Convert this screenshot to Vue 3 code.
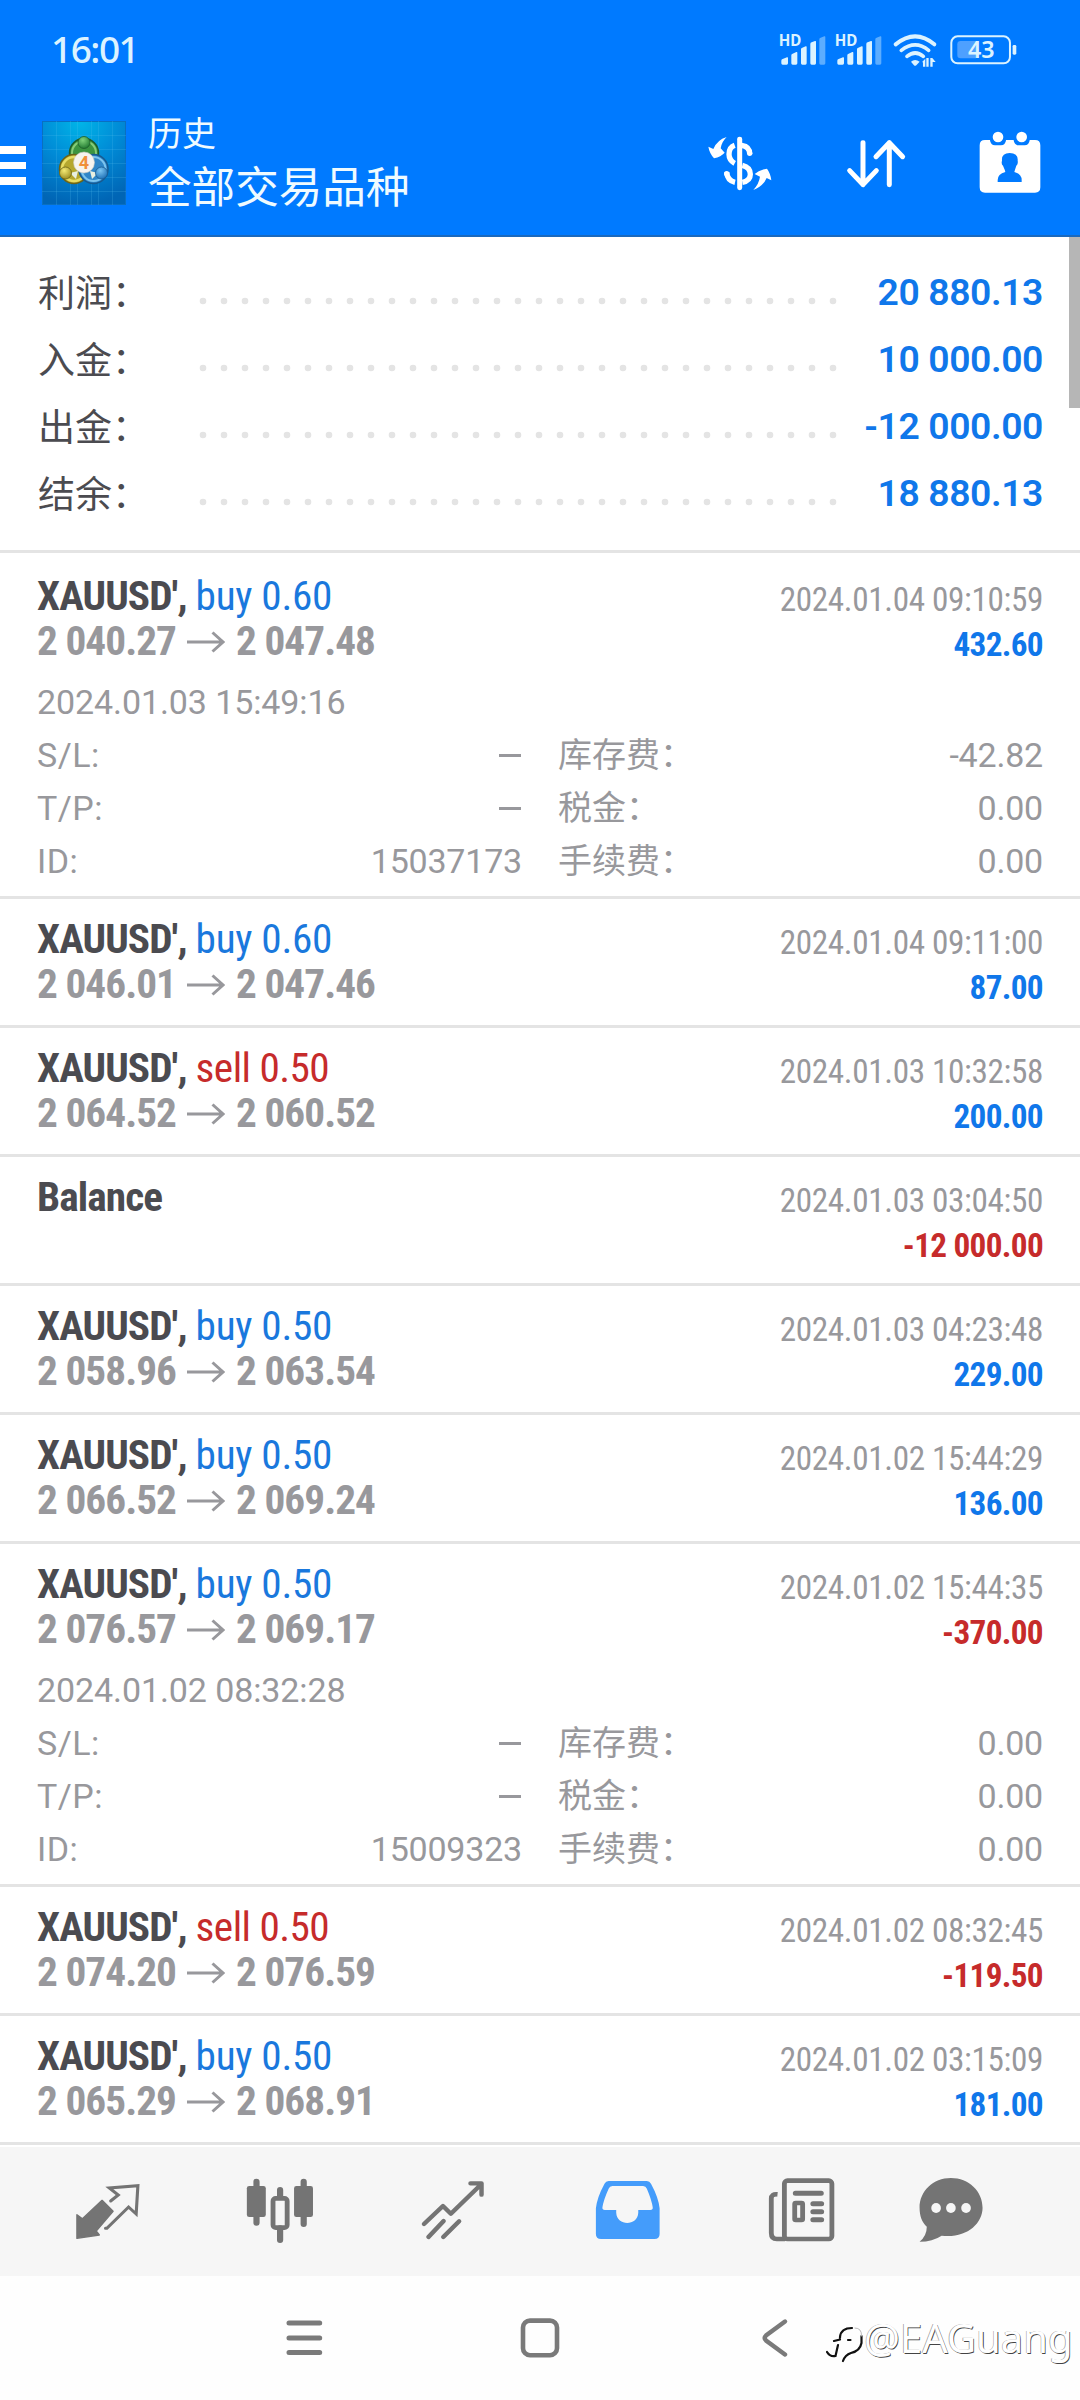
<script setup>
const summary = [
  { label: '利润：', value: '20 880.13' },
  { label: '入金：', value: '10 000.00' },
  { label: '出金：', value: '-12 000.00' },
  { label: '结余：', value: '18 880.13' },
]
const deals = [
  { sym: "XAUUSD',", side: 'buy', vol: '0.60', from: '2 040.27', to: '2 047.48', time: '2024.01.04 09:10:59', profit: '432.60',
    open: { time: '2024.01.03 15:49:16', id: '15037173', swap: '-42.82' } },
  { sym: "XAUUSD',", side: 'buy', vol: '0.60', from: '2 046.01', to: '2 047.46', time: '2024.01.04 09:11:00', profit: '87.00' },
  { sym: "XAUUSD',", side: 'sell', vol: '0.50', from: '2 064.52', to: '2 060.52', time: '2024.01.03 10:32:58', profit: '200.00' },
  { sym: 'Balance', time: '2024.01.03 03:04:50', profit: '-12 000.00' },
  { sym: "XAUUSD',", side: 'buy', vol: '0.50', from: '2 058.96', to: '2 063.54', time: '2024.01.03 04:23:48', profit: '229.00' },
  { sym: "XAUUSD',", side: 'buy', vol: '0.50', from: '2 066.52', to: '2 069.24', time: '2024.01.02 15:44:29', profit: '136.00' },
  { sym: "XAUUSD',", side: 'buy', vol: '0.50', from: '2 076.57', to: '2 069.17', time: '2024.01.02 15:44:35', profit: '-370.00',
    open: { time: '2024.01.02 08:32:28', id: '15009323', swap: '0.00' } },
  { sym: "XAUUSD',", side: 'sell', vol: '0.50', from: '2 074.20', to: '2 076.59', time: '2024.01.02 08:32:45', profit: '-119.50' },
  { sym: "XAUUSD',", side: 'buy', vol: '0.50', from: '2 065.29', to: '2 068.91', time: '2024.01.02 03:15:09', profit: '181.00' },
]
</script>

<template>
  <div class="screen">
    <header class="top">
      <div class="status">
        <span class="clock">16:01</span>
        <svg class="sys" viewBox="350 65 730 170" width="243.3" height="56.7">
          <g fill="#dcf3ff">
            <g v-for="o in [0, 168]" :key="o" :transform="`translate(${o} 0)`">
              <text x="355" y="138" font-size="46" font-weight="700" textLength="68" lengthAdjust="spacingAndGlyphs">HD</text>
              <path d="M363 181q0-4 4-5l13-5q3-1 3 2v16q0 4-4 4h-12q-4 0-4-4z" />
              <path d="M393 165q0-4 4-5l11-5q3-1 3 2v32q0 4-4 4h-10q-4 0-4-4z" />
              <path d="M422 147q0-4 4-5l10-4q3-1 3 2v49q0 4-4 4h-9q-4 0-4-4z" />
              <path d="M450 131q0-4 4-5l10-4q3-1 3 2v65q0 4-4 4h-9q-4 0-4-4z" />
              <path opacity=".42" d="M477 117q0-4 4-5l11-4q3-1 3 2v79q0 4-4 4h-10q-4 0-4-4z" />
            </g>
            <path d="M752 184q12-10 26 0l-10 11q-4 3-7 0z" />
            <path d="M786 184l9-9v24h-7v-12zM798 173h7v26h-7zM810 173h6l10 12h-9v14h-7z" />
            <rect x="1057" y="134" width="11" height="29" rx="4" />
          </g>
          <g fill="none" stroke="#dcf3ff" stroke-width="12" stroke-linecap="round">
            <path d="M706 132q59-48 116 0" />
            <path d="M723 150q42-33 82 0" stroke-width="11" />
            <path d="M740 168q25-20 49 0" stroke-width="11" />
          </g>
          <rect x="873" y="108" width="176" height="81" rx="19" fill="none" stroke="#dcf3ff" stroke-width="6" />
          <path d="M901 122h46v52h-46q-10 0-10-10v-32q0-10 10-10z" fill="#4ea0ff" />
          <text x="923" y="174" font-size="71" font-weight="600" fill="#dcf3ff" textLength="80" lengthAdjust="spacingAndGlyphs">43</text>
        </svg>
      </div>
      <div class="bar">
        <div class="burger"><i></i><i></i><i></i></div>
        <svg class="logo" viewBox="0 0 84 84" width="84" height="84">
          <defs>
            <radialGradient id="lb" cx=".45" cy="0" r="1"><stop offset="0" stop-color="#00b5e8" /><stop offset=".5" stop-color="#008ad6" /><stop offset="1" stop-color="#0065b5" /></radialGradient>
            <radialGradient id="lg" cx=".4" cy=".3" r=".8"><stop offset="0" stop-color="#7fd27a" /><stop offset="1" stop-color="#17702a" /></radialGradient>
            <radialGradient id="ly" cx=".4" cy=".3" r=".8"><stop offset="0" stop-color="#f4ea74" /><stop offset="1" stop-color="#94841a" /></radialGradient>
            <radialGradient id="lc" cx=".4" cy=".3" r=".8"><stop offset="0" stop-color="#7cc6f2" /><stop offset="1" stop-color="#1467b0" /></radialGradient>
          </defs>
          <rect x=".5" y=".5" width="83" height="83" fill="url(#lb)" stroke="#0a6fc0" />
          <path d="M0 14.500H84M0 28.500H84M0 42.500H84M0 56.500H84M0 70.500H84M14.500 0V84M28.500 0V84M35.500 0V84M49.500 0V84M56.500 0V84M70.500 0V84" stroke="#5cc4ef" stroke-opacity=".2" fill="none" />
          <circle cx="42" cy="32" r="14.500" fill="#3c9440" stroke="#1d5d2a" stroke-width="1.500" />
          <circle cx="42" cy="32" r="12" fill="none" stroke="#86cc78" stroke-width="2" />
          <circle cx="32" cy="48" r="14.500" fill="#b5a72e" stroke="#6b6418" stroke-width="1.500" />
          <circle cx="32" cy="48" r="12" fill="none" stroke="#e6dc64" stroke-width="2.500" />
          <circle cx="51.500" cy="48" r="14.500" fill="#2f86c8" stroke="#185a90" stroke-width="1.500" />
          <circle cx="51.500" cy="48" r="12" fill="none" stroke="#7cc4ee" stroke-width="2" />
          <path d="M28 52L36 50L34 58ZM56 52L48 50L50 58Z" fill="#e8efe0" />
          <circle cx="42" cy="21.500" r="6" fill="url(#lg)" stroke="#1d5d2a" stroke-width=".8" />
          <circle cx="23.500" cy="52" r="6" fill="url(#ly)" stroke="#6b6418" stroke-width=".8" />
          <circle cx="59.500" cy="52" r="6" fill="url(#lc)" stroke="#185a90" stroke-width=".8" />
          <circle cx="42" cy="41.500" r="10.500" fill="#f6f3ee" stroke="#c8c8c0" stroke-width=".6" />
          <text x="42" y="48" text-anchor="middle" font-size="18" font-weight="700" fill="#f0903a">4</text>
        </svg>
        <div class="titles">
          <div class="t1">历史</div>
          <div class="t2">全部交易品种</div>
        </div>
        <svg class="a-dollar" viewBox="140 390 200 190" width="66.7" height="63.3" fill="#fff">
          <path fill="none" stroke="#fff" stroke-width="15" stroke-linecap="round" d="M238 418V563" />
          <path fill="none" stroke="#fff" stroke-width="16" d="M244 436q25 4 24 26M223 436q-17 6-17 27 0 18 17 27M246 496q24 6 24 27 0 20-24 24M199 517q2 25 25 30" />
          <circle cx="268" cy="460" r="8" /><circle cx="199" cy="521" r="8" />
          <path d="M199 411Q184 425 181 445L193 458Q182 470 161 475Q147 459 144 440L159 447Q170 420 199 411Z" />
          <path d="M279 570Q296 551 299 530L283 522Q296 510 320 506Q331 521 333 541L319 534Q309 558 279 570Z" />
        </svg>
        <svg class="a-sort" viewBox="550 410 190 160" width="63.3" height="53.3" fill="none" stroke="#fff" stroke-width="15" stroke-linecap="round" stroke-linejoin="round">
          <path d="M607 427V553M567 511L607 553L647 511M686 553V427M646 469L686 427L726 469" />
        </svg>
        <svg class="a-cal" viewBox="955 390 195 195" width="65" height="65" fill="#fff">
          <path d="M976 420H991V421Q993 436 1006 436H1024Q1037 436 1039 421V420H1062V421Q1064 436 1077 436H1095Q1108 436 1110 421V420H1126Q1142 420 1142 436V562Q1142 578 1126 578H976Q960 578 960 562V436Q960 420 976 420Z" />
          <circle cx="1015" cy="411" r="16" /><circle cx="1086" cy="411" r="16" />
          <path fill="#007aff" d="M1050 459Q1076 459 1074 482Q1076 492 1070 497Q1065 512 1064 516Q1086 522 1086 540V546H1014V540Q1014 522 1037 516Q1036 510 1030 497Q1024 492 1027 482Q1025 459 1050 459Z" />
        </svg>
      </div>
    </header>

    <section class="summary">
      <div v-for="s in summary" :key="s.label" class="srow">
        <span class="slabel">{{ s.label }}</span>
        <svg class="dots" width="640" height="8"><line x1="4" y1="4" x2="635" y2="4" stroke="#e4e4e4" stroke-width="6.600" stroke-linecap="round" stroke-dasharray="0 21" /></svg>
        <span class="svalue">{{ s.value }}</span>
      </div>
      <i class="thumb"></i>
    </section>

    <section class="list">
      <article v-for="(d, i) in deals" :key="i" class="deal">
        <div class="head">
          <div class="left">
            <div class="name cond"><b>{{ d.sym }}</b><span v-if="d.side" :class="d.side">{{ d.side }} {{ d.vol }}</span></div>
            <div v-if="d.from" class="prices">
              <span class="cond">{{ d.from }}</span>
              <svg width="38" height="22" viewBox="0 0 38 22" fill="none" stroke="#98989c" stroke-width="3"><path d="M0 11H36M25.500 1.500L36 11L25.500 20.500" /></svg>
              <span class="cond">{{ d.to }}</span>
            </div>
          </div>
          <div class="right">
            <div class="time cond">{{ d.time }}</div>
            <div class="profit cond" :class="{ neg: d.profit[0] === '-' }">{{ d.profit }}</div>
          </div>
        </div>
        <div v-if="d.open" class="more">
          <div class="otime">{{ d.open.time }}</div>
          <div class="grid">
            <span class="k">S/L:</span><i class="dash"></i><span class="cn">库存费：</span><span class="v">{{ d.open.swap }}</span>
            <span class="k">T/P:</span><i class="dash"></i><span class="cn">税金：</span><span class="v">0.00</span>
            <span class="k">ID:</span><span class="v">{{ d.open.id }}</span><span class="cn">手续费：</span><span class="v">0.00</span>
          </div>
        </div>
      </article>
    </section>

    <nav class="tabs">
      <svg viewBox="200 120 225 240" width="77.5" height="80" preserveAspectRatio="none">
        <path fill="#747474" stroke="#747474" stroke-width="4" stroke-linejoin="round" d="M296 211L328 244L279 303L288 315L223 325V254L239 266Z" />
        <path fill="none" stroke="#747474" stroke-width="9" stroke-linecap="round" d="M321 213L343 195L317 174L400 167L395 252L373 231L310 295H306" />
      </svg>
      <svg viewBox="700 120 227 240" width="78.2" height="80" preserveAspectRatio="none">
        <path fill="none" stroke="#747474" stroke-width="18" stroke-linecap="round" d="M745 155V278M882 155V282M813.500 180V200M813.500 295V330" />
        <rect x="717" y="168" width="55" height="93" rx="7" fill="#747474" /><rect x="854" y="168" width="55" height="93" rx="7" fill="#747474" />
        <rect x="793" y="205" width="41" height="88" rx="8" fill="none" stroke="#747474" stroke-width="14" />
      </svg>
      <svg viewBox="1203 120 225 240" width="77.5" height="80" preserveAspectRatio="none" fill="none" stroke="#747474" stroke-width="13" stroke-linecap="round" stroke-linejoin="round">
        <path d="M1232 282L1287 228L1310 251L1396 165M1367 160H1399V194M1245 321L1289 273M1288 321L1334 274" />
      </svg>
      <svg viewBox="141 120 225 240" width="77.5" height="80" preserveAspectRatio="none">
        <path fill="#449cfb" fill-rule="evenodd" d="M198 153H309Q317 153 321 161Q343 203 346 235V312Q346 327 331 327H176Q161 327 161 312V235Q164 203 186 161Q190 153 198 153ZM209 168Q201 168 198 176Q183 210 180 232Q179 240 187 240H220V248C222 289 282 289 284 248V240H319Q327 240 326 232Q323 210 309 176Q306 168 298 168Z" />
      </svg>
      <svg viewBox="645 120 230 240" width="79.2" height="80" preserveAspectRatio="none" fill="none" stroke="#747474" stroke-width="14">
        <rect x="710" y="152" width="138" height="175" rx="9" />
        <path d="M690 193Q672 191 672 206V309Q672 327 688 327H712" />
        <rect x="740" y="219" width="23" height="51" rx="3" />
        <path stroke-width="15" stroke-linecap="round" d="M742 190H817M793 221H818M793 245H818M793 269H818" />
      </svg>
      <svg viewBox="1080 120 226 240" width="77.800" height="80" preserveAspectRatio="none">
        <path fill="#747474" d="M1193 144C1245 144 1285 184 1285 233C1285 283 1235 326 1166 317Q1140 335 1102 335Q1123 317 1123 290C1109 276 1102 258 1102 233C1102 184 1141 144 1193 144Z" />
        <g fill="#f6f6f6"><ellipse cx="1150" cy="234" rx="14" ry="15" /><ellipse cx="1193" cy="234" rx="14" ry="15" /><ellipse cx="1237" cy="234" rx="14" ry="15" /></g>
      </svg>
    </nav>

    <footer class="keys">
      <svg width="38" height="42" fill="none" stroke="#7a7a7a" stroke-width="5" stroke-linecap="round"><path d="M4 6H34.700M4 21H34.700M4 35.600H34.700" /></svg>
      <svg width="42" height="42" fill="none" stroke="#7a7a7a" stroke-width="4.600"><rect x="4" y="3.600" width="34" height="34.600" rx="7" /></svg>
      <svg width="28" height="42" fill="none" stroke="#7a7a7a" stroke-width="4.400" stroke-linecap="round"><path d="M24 4.500L5 18.500Q2.500 21 5 23.500L24 37.500" /></svg>
      <div class="mark">
        <svg width="42" height="46" viewBox="10 7 42 46" fill="none" stroke="#111" stroke-linecap="round">
          <path stroke-width="2.200" d="M24 28V27Q25 18 36 18M18 31L24 29.500M32 30H34.500M22 35L19.500 46Q14 47 11 42M45.500 26V33Q44 41 35 43Q29 45 27 51" />
          <path stroke="#bbb" stroke-width="1" d="M39 18Q46 18 45.500 26" />
        </svg>
        <span>@EAGuang</span>
      </div>
    </footer>
  </div>
</template>

<style>
body { background: #fff; }
</style>
<style scoped>
.screen { width: 1080px; height: 2400px; display: flex; flex-direction: column; overflow: hidden; background: #fff; font-family: Roboto, "Noto Sans CJK SC", sans-serif; color: #4b4b50; }
.top { height: 235px; border-bottom: 2px solid #1b69bd; background: #007aff; flex: none; color: #effbff; }
.status { height: 100px; display: flex; justify-content: space-between; align-items: center; padding: 0 60px 0 51px; box-sizing: border-box; }
.clock { font: 500 37px/40px "Noto Sans", sans-serif; letter-spacing: -1.5px; padding-bottom: 2px; color: #dcf3ff; }
.sys { font-family: "Noto Sans", sans-serif; overflow: visible; }
.bar { display: flex; align-items: flex-start; }
.burger { width: 26px; margin: 46px 16px 0 0; }
.burger i { display: block; height: 7.500px; margin-bottom: 8.200px; background: #fff; }
.logo { margin-top: 21px; }
.titles { margin: 12px 0 0 22px; width: 559px; font-family: "Noto Sans CJK SC", sans-serif; }
.t1 { font-size: 34px; line-height: 40px; }
.t2 { font-size: 43.600px; line-height: 60px; margin-top: 2px; }
.a-dollar { margin: 30px 70px 0 0; }
.a-sort { margin: 37px 71px 0 0; }
.a-cal { margin-top: 30px; }
.summary { position: relative; height: 313px; border-bottom: 3px solid #e4e4e4; flex: none; }
.summary .srow:first-child { margin-top: 21px; }
.srow { height: 67px; display: flex; align-items: center; padding: 0 37px 0 38px; }
.slabel { width: 160.500px; font: 400 37px/67px "Noto Sans CJK SC", sans-serif; margin-top: -1px; }
.dots { flex: none; margin-top: 18px; }
.svalue { flex: 1; text-align: right; font-size: 37.300px; font-weight: 650; letter-spacing: -.4px; color: #1077ea; }
.thumb { position: absolute; right: 0; top: 0; width: 11px; height: 171px; background: #b6b6b6; }
.list { flex: none; padding-top: 3px; }
.deal { border-bottom: 3px solid #e4e4e4; }
.head { height: 126px; display: flex; justify-content: space-between; padding: 0 37px 0 37px; }
.cond { font-family: "Roboto Condensed", Roboto, sans-serif; font-stretch: 75%; }
.left { padding-top: 18px; }
.name { font-size: 41.250px; line-height: 45px; white-space: pre; }
.name b { font-weight: 700; letter-spacing: -.9px; }
.name span { letter-spacing: -.3px; margin-left: 9px; }
.buy { color: #1a78dd; }
.name .sell { color: #c62b2b; letter-spacing: -.55px; }
.prices { display: flex; align-items: center; gap: 11.500px; font-size: 41.250px; line-height: 45px; font-weight: 700; letter-spacing: -.95px; color: #98989c; }
.prices svg { margin-right: -1px; }
.right { text-align: right; padding-top: 21px; }
.time { font-size: 33.200px; line-height: 45px; letter-spacing: -.35px; color: #98989c; }
.profit { font-size: 33.200px; line-height: 45px; letter-spacing: -.65px; font-weight: 700; color: #1077ea; }
.profit.neg { color: #c62b2b; }
.more { display: flex; flex-direction: column; height: 214px; padding: 0 37px; color: #98989c; font-size: 34px; }
.otime { line-height: 53px; margin-top: -6px; letter-spacing: -.1px; }
.grid { display: grid; grid-template-columns: 184px 301px 219px 1fr; line-height: 53px; align-items: center; }
.k { letter-spacing: .5px; }
.cn { margin: -3px 0 3px 36px; font-family: "Noto Sans CJK SC", sans-serif; }
.v { text-align: right; letter-spacing: -.2px; }
.dash { width: 22.500px; height: 2.500px; margin-right: 1px; background: #98989c; justify-self: end; }
.tabs { margin-top: 2px; height: 129px; background: #f6f6f6; flex: none; display: grid; grid-template-columns: 173.500px 171.500px 174px 175px 173.500px 125px; justify-items: center; padding: 23px 0 0 21px; box-sizing: border-box; }
.keys { flex: 1; background: #fefefe; display: flex; align-items: flex-start; padding: 41px 0 0 285px; }
.keys > svg { flex: none; }
.keys > svg:nth-child(1) { margin-right: 196px; }
.keys > svg:nth-child(2) { margin-right: 200px; }
.mark { display: flex; margin: 0 0 0 37px; }
.mark span { margin-left: -4px; font: 400 40px/42px "Noto Sans", sans-serif; letter-spacing: 0; color: #fff; text-shadow: -.6px -.4px .5px #999, .8px .8px .6px #444; }
</style>
